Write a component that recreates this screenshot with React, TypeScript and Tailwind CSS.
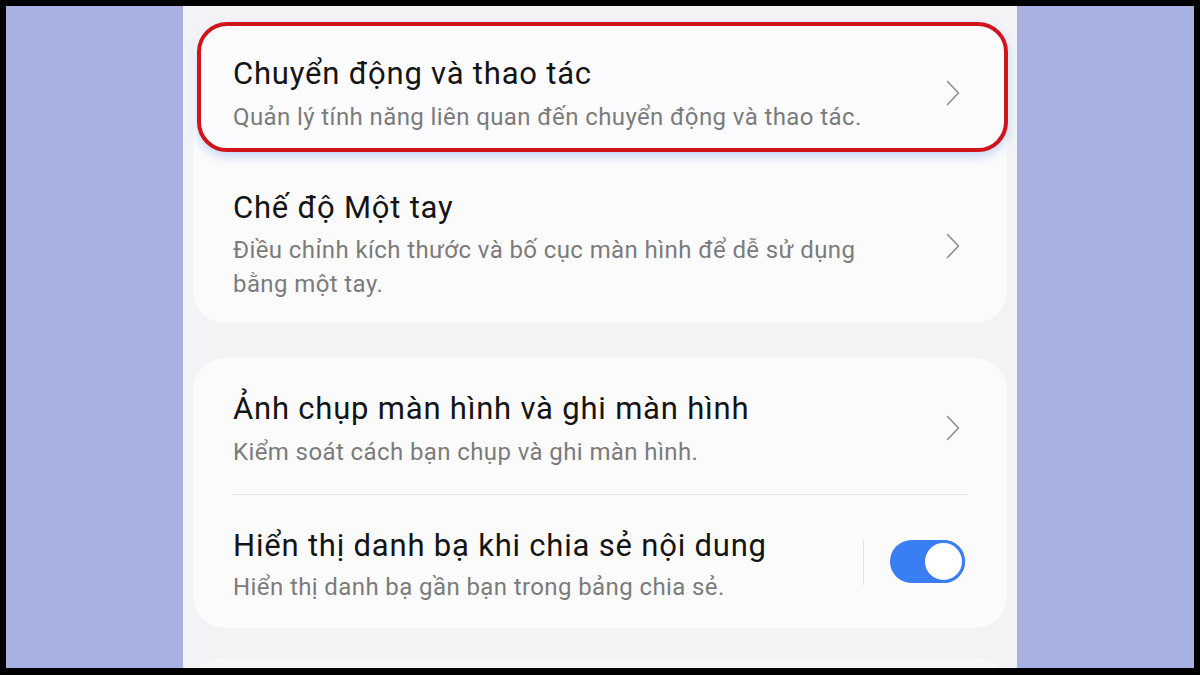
import React from "react";

const font = { fontFamily: "Roboto, 'Noto Sans', sans-serif" };

function Chevron() {
  return (
    <svg width="16" height="26" viewBox="0 0 16 26" fill="none" className="shrink-0">
      <path d="M2.5 1.5 L13.5 13 L2.5 24.5" stroke="#8e8e8e" strokeWidth="1.6" strokeLinecap="round" strokeLinejoin="round" />
    </svg>
  );
}

function Texts({ title, sub }: { title: string; sub: string }) {
  return (
    <div className="flex-1 min-w-0">
      <div className="text-[31px] leading-[36px] tracking-[0.8px] text-[#141414]">{title}</div>
      <div className="mt-[8px] text-[24px] leading-[34px] tracking-[0.4px] text-[#7b7b7b]">{sub}</div>
    </div>
  );
}

export default function App() {
  return (
    <div className="w-[1200px] h-[675px] bg-black pt-[6px] px-[6px] pb-[7px]" style={font}>
      <div className="flex h-full">
        <div className="w-[177px] bg-[#a9b1e2]" />
        <div className="w-[834px] bg-[#f3f3f6] px-[10px] pt-[16px] flex flex-col overflow-hidden">
          {/* Card 1 */}
          <div className="rounded-[32px] bg-[#fbfbfc] h-[301px] shrink-0 flex flex-col">
            <div className="ml-[4px] mr-[-1px] h-[130px] shrink-0 rounded-[30px] border-[4px] border-[#d0141c] bg-[#fcfcfe] shadow-[0_5px_10px_rgba(110,150,235,0.35)] flex items-start pl-[32px] pr-[43px] pt-[30px]">
              <Texts title="Chuyển động và thao tác" sub="Quản lý tính năng liên quan đến chuyển động và thao tác." />
              <div className="mt-[24px]"><Chevron /></div>
            </div>
            <div className="flex items-center pl-[40px] pr-[46px] pt-[38px] pb-[24px]">
              <div className="flex-1 min-w-0">
                <div className="text-[31px] leading-[36px] tracking-[0.8px] text-[#141414]">Chế độ Một tay</div>
                <div className="mt-[7px] text-[24px] leading-[34px] tracking-[0.4px] text-[#7b7b7b] w-[660px]">
                  Điều chỉnh kích thước và bố cục màn hình để dễ sử dụng bằng một tay.
                </div>
              </div>
              <Chevron />
            </div>
          </div>

          {/* Card 2 */}
          <div className="mt-[35px] rounded-[32px] bg-[#fbfbfc] h-[270px] shrink-0 flex flex-col">
            <div className="h-[136px] shrink-0 flex items-start pl-[40px] pr-[46px] pt-[33px]">
              <Texts title="Ảnh chụp màn hình và ghi màn hình" sub="Kiểm soát cách bạn chụp và ghi màn hình." />
              <div className="mt-[24px]"><Chevron /></div>
            </div>
            <div className="ml-[39px] mr-[40px] h-px bg-[#e6e6e8]" />
            <div className="flex-1 flex items-center pl-[40px] pr-[42px]">
              <div className="flex-1 min-w-0 pt-[8px]">
                <div className="text-[31px] leading-[36px] tracking-[0.8px] text-[#141414]">Hiển thị danh bạ khi chia sẻ nội dung</div>
                <div className="mt-[6px] text-[24px] leading-[34px] tracking-[0.4px] text-[#7b7b7b]">Hiển thị danh bạ gần bạn trong bảng chia sẻ.</div>
              </div>
              <div className="w-px h-[46px] bg-[#e2e2e4] mr-[26px]" />
              <div className="w-[75px] h-[43px] rounded-full bg-[#3a7ef3] flex items-center justify-end">
                <div className="w-[43px] h-[43px] rounded-full bg-white border-[3px] border-[#3a7ef3]" />
              </div>
            </div>
          </div>

          {/* Card 3 (partial) */}
          <div className="mt-[30px] rounded-t-[32px] bg-[#f7f7f9] h-[40px] shrink-0" />
        </div>
        <div className="w-[177px] bg-[#a9b1e2]" />
      </div>
    </div>
  );
}
